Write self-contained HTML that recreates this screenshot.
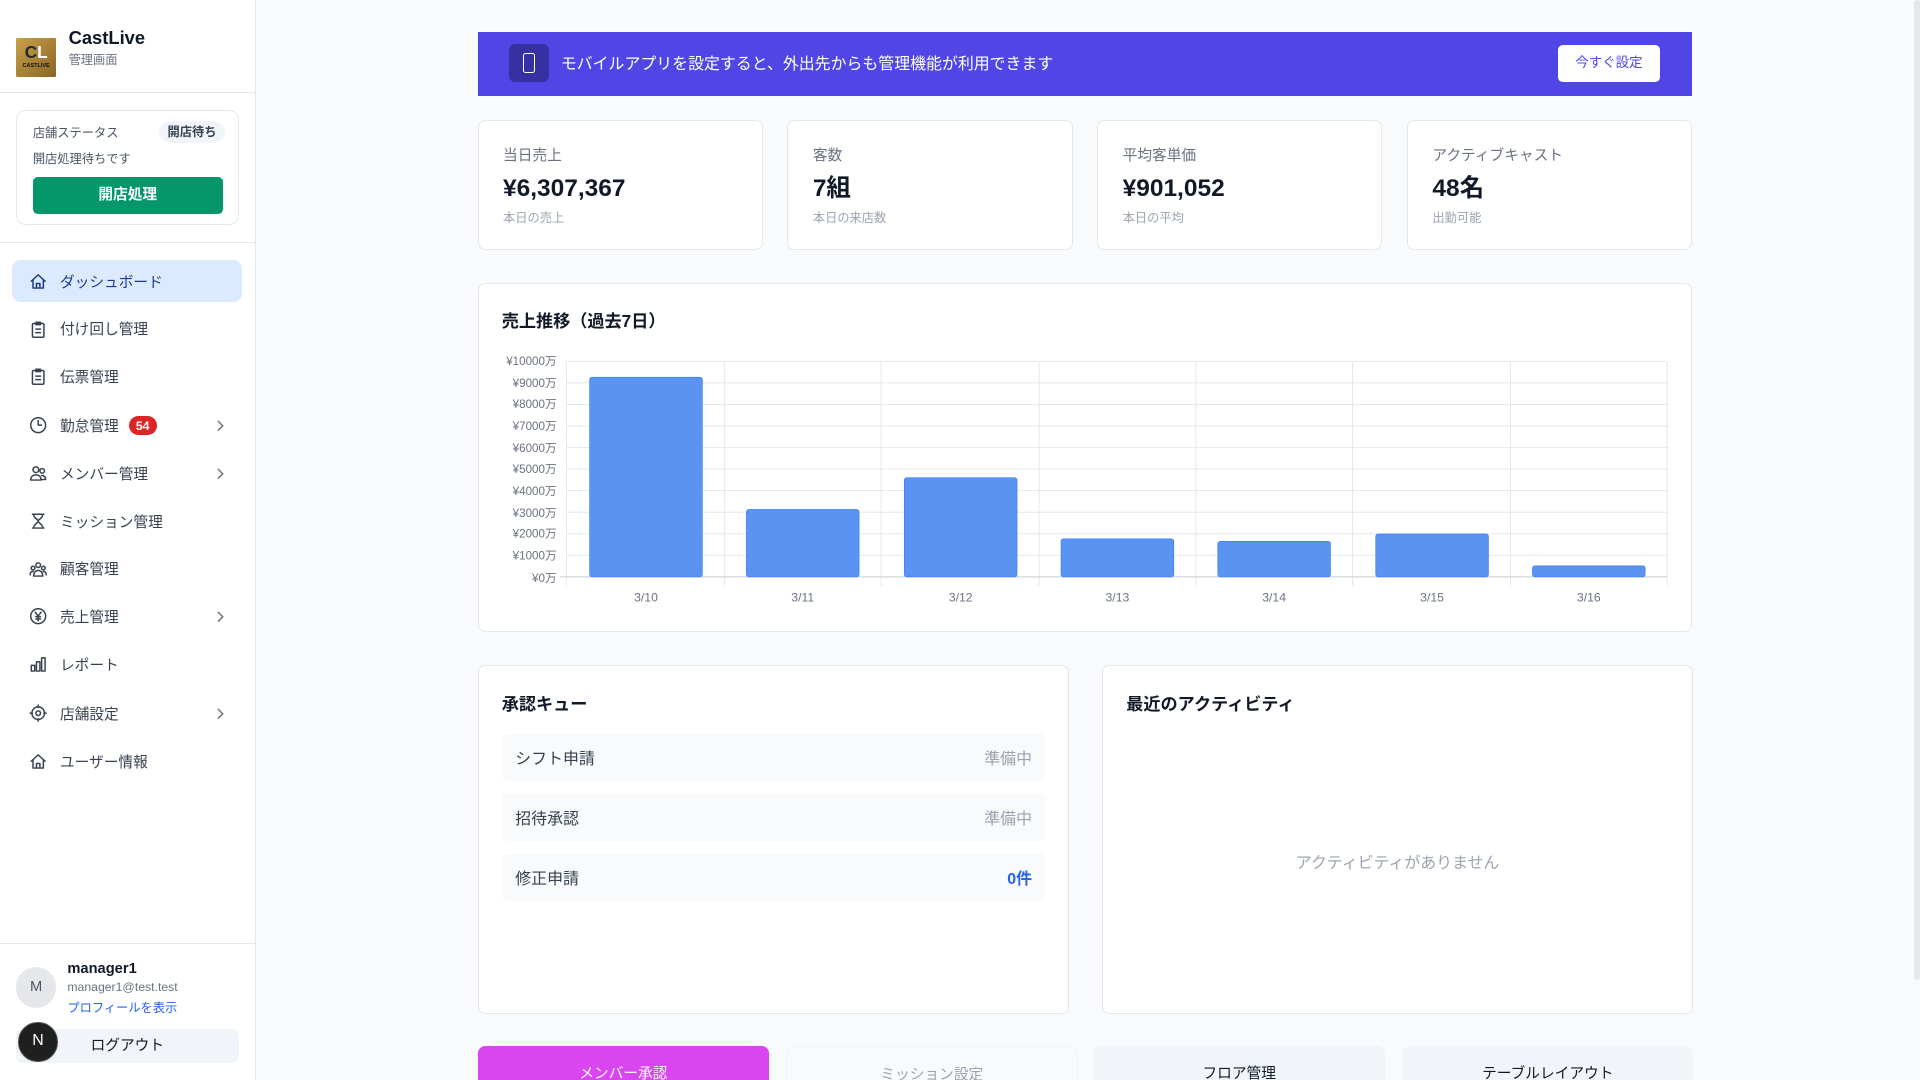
<!DOCTYPE html>
<html><head><meta charset="utf-8">
<style>
*{box-sizing:border-box;margin:0;padding:0}
html,body{width:1920px;height:1080px;overflow:hidden;background:#f8fafc}
#r{zoom:1.2245;width:1568px;height:882px;position:relative;font-family:"Liberation Sans","Noto Sans CJK JP",sans-serif;color:#111827}
.a{position:absolute}
.sb{left:0;top:0;width:209px;height:882px;background:#fff;border-right:1px solid #e5e7eb}
.card{background:#fff;border:1px solid #e5e7eb;border-radius:6px;position:absolute}
.nav{position:absolute;left:10px;width:188px;height:35px;border-radius:7px;font-size:12px;color:#374151;display:flex;align-items:center;padding-left:14px}
.nav svg.i{width:15px;height:15px;margin-right:10px;fill:none;stroke:#374151;stroke-width:1.3;stroke-linecap:round;stroke-linejoin:round}
.nav svg.chev{position:absolute;right:15px;top:12px;width:7px;height:11px;fill:none;stroke:#6b7280;stroke-width:1.2}
.st .l{font-size:12px;color:#6b7280;position:absolute;left:20px;top:19px}
.st .v{font-size:20px;font-weight:bold;position:absolute;left:20px;top:43px;line-height:24px}
.st .s{font-size:10px;color:#9ca3af;position:absolute;left:20px;top:71px}
.q{position:absolute;left:19px;width:444px;height:39px;background:#f8fafc;border-radius:4px;font-size:13px;color:#374151;display:flex;align-items:center;justify-content:space-between;padding:0 11px}
.tab{position:absolute;top:854px;height:40px;border-radius:6px;font-size:12px;text-align:center;padding-top:13px;width:238px}
</style></head><body><div id="r">
<div class="a sb">
 <div class="a" style="left:13px;top:31px;width:33px;height:32px;background:linear-gradient(135deg,#c9a24a,#8a6424);border-radius:1px;color:#fff;font-size:4.5px;font-weight:bold;text-align:center">
  <div style="font-size:14px;margin-top:3px;color:#1f2937;font-weight:bold">C<span style="color:#fff">L</span></div><div style="color:#111">CASTLIVE</div></div>
 <div class="a" style="left:56px;top:22px;font-size:15px;font-weight:bold">CastLive</div>
 <div class="a" style="left:56px;top:41px;font-size:10px;color:#6b7280">管理画面</div>
 <div class="a" style="left:0;top:75px;width:208px;border-top:1px solid #e5e7eb"></div>
 <div class="a" style="left:13px;top:90px;width:182px;height:94px;border:1px solid #e5e7eb;border-radius:8px">
  <div class="a" style="left:13px;top:10px;font-size:10px;color:#4b5563">店舗ステータス</div>
  <div class="a" style="left:116px;top:8px;width:54px;height:18px;background:#f1f5f9;border-radius:9px;font-size:10px;font-weight:bold;color:#374151;text-align:center;line-height:18px">開店待ち</div>
  <div class="a" style="left:13px;top:31px;font-size:10px;color:#4b5563">開店処理待ちです</div>
  <div class="a" style="left:13px;top:54px;width:155px;height:30px;background:#059669;border-radius:4px;color:#fff;font-size:12px;font-weight:bold;text-align:center;line-height:30px">開店処理</div>
 </div>
 <div class="a" style="left:0;top:198px;width:208px;border-top:1px solid #e5e7eb"></div>
 <div class="nav" style="top:212px;background:#dbeafe;color:#1e3a8a"><svg class="i" viewBox="0 0 16 16" style="stroke:#1e3a8a"><path d="M2 8L8 2.5 14 8M3.5 6.8V14h9V6.8M6.5 14v-4h3v4"/></svg>ダッシュボード</div>
 <div class="nav" style="top:251px"><svg class="i" viewBox="0 0 16 16"><rect x="3" y="3" width="10" height="12" rx="1"/><path d="M6 2h4v2H6zM6 8h4M6 11h4"/></svg>付け回し管理</div>
 <div class="nav" style="top:290px"><svg class="i" viewBox="0 0 16 16"><rect x="3" y="3" width="10" height="12" rx="1"/><path d="M6 2h4v2H6zM6 8h4M6 11h4"/></svg>伝票管理</div>
 <div class="nav" style="top:330px"><svg class="i" viewBox="0 0 16 16"><circle cx="8" cy="8" r="6.5"/><path d="M8 4v4h3"/></svg>勤怠管理<span style="margin-left:8px;background:#dc2626;color:#fff;font-size:10px;font-weight:bold;border-radius:9px;padding:2px 6px">54</span><svg class="chev" viewBox="0 0 7 11"><path d="M1.5 1.5l4 4-4 4"/></svg></div>
 <div class="nav" style="top:369px"><svg class="i" viewBox="0 0 16 16"><circle cx="6" cy="5" r="2.5"/><circle cx="11.5" cy="6" r="2"/><path d="M1.5 14c0-3 2-4.5 4.5-4.5S10.5 11 10.5 14zM11 10c2 0 3.5 1 3.5 3.5H11"/></svg>メンバー管理<svg class="chev" viewBox="0 0 7 11"><path d="M1.5 1.5l4 4-4 4"/></svg></div>
 <div class="nav" style="top:408px"><svg class="i" viewBox="0 0 16 16"><path d="M3 2h10M4 2c0 4 4 4 4 6s-4 2-4 6M12 2c0 4-4 4-4 6s4 2 4 6M3 14h10"/></svg>ミッション管理</div>
 <div class="nav" style="top:447px"><svg class="i" viewBox="0 0 16 16"><circle cx="8" cy="4.5" r="2"/><circle cx="3.5" cy="7" r="1.6"/><circle cx="12.5" cy="7" r="1.6"/><path d="M4 14c0-3 2-5 4-5s4 2 4 5zM1 13c0-2 1-3 2.5-3M15 13c0-2-1-3-2.5-3"/></svg>顧客管理</div>
 <div class="nav" style="top:486px"><svg class="i" viewBox="0 0 16 16"><circle cx="8" cy="8" r="6.5"/><path d="M5.5 4.5L8 8l2.5-3.5M8 8v4M6 8.5h4M6 10.5h4"/></svg>売上管理<svg class="chev" viewBox="0 0 7 11"><path d="M1.5 1.5l4 4-4 4"/></svg></div>
 <div class="nav" style="top:525px"><svg class="i" viewBox="0 0 16 16"><rect x="2" y="9" width="3" height="5"/><rect x="6.5" y="6" width="3" height="8"/><rect x="11" y="2.5" width="3" height="11.5"/></svg>レポート</div>
 <div class="nav" style="top:565px"><svg class="i" viewBox="0 0 16 16"><circle cx="8" cy="8" r="5.5"/><circle cx="8" cy="8" r="2"/><path d="M8 1v2M8 13v2M1 8h2M13 8h2"/></svg>店舗設定<svg class="chev" viewBox="0 0 7 11"><path d="M1.5 1.5l4 4-4 4"/></svg></div>
 <div class="nav" style="top:604px"><svg class="i" viewBox="0 0 16 16"><path d="M2 8L8 2.5 14 8M3.5 6.8V14h9V6.8M6.5 14v-4h3v4"/></svg>ユーザー情報</div>
 <div class="a" style="left:0;top:770px;width:208px;border-top:1px solid #e5e7eb"></div>
 <div class="a" style="left:13px;top:790px;width:33px;height:33px;border-radius:50%;background:#e5e7eb;color:#4b5563;font-size:12px;text-align:center;line-height:33px">M</div>
 <div class="a" style="left:55px;top:785px;font-size:12px;font-weight:bold">manager1</div>
 <div class="a" style="left:55px;top:800px;font-size:10px;color:#6b7280">manager1@test.test</div>
 <div class="a" style="left:55px;top:815px;font-size:10px;color:#2563eb">プロフィールを表示</div>
 <div class="a" style="left:13px;top:840px;width:182px;height:28px;background:#f1f5f9;border-radius:5px;font-size:12px;color:#111827;text-align:center;line-height:28px">ログアウト</div>
 <div class="a" style="left:15px;top:835px;width:32px;height:32px;border-radius:50%;background:#1f1f1f;border:1px solid #555;color:#fff;font-size:13px;text-align:center;line-height:30px">N</div>
</div>
<div class="a" style="left:1563px;top:0;width:5px;height:800px;background:#e5e7eb;border-radius:3px"></div>
<div class="a" style="left:390px;top:26px;width:992px;height:52px;background:#4f46e5">
 <div class="a" style="left:26px;top:10px;width:32px;height:31px;background:#3730a3;border-radius:5px"><div class="a" style="left:11px;top:7px;width:10px;height:17px;border:1.3px solid #fff;border-radius:2px"></div></div>
 <div class="a" style="left:68px;top:16px;font-size:13px;color:#fff">モバイルアプリを設定すると、外出先からも管理機能が利用できます</div>
 <div class="a" style="left:882px;top:11px;width:84px;height:30px;background:#fff;border-radius:4px;font-size:11px;color:#4f46e5;text-align:center;line-height:30px">今すぐ設定</div>
</div>
<div class="card st" style="left:390px;top:98px;width:233px;height:106px"><div class="l">当日売上</div><div class="v">¥6,307,367</div><div class="s">本日の売上</div></div>
<div class="card st" style="left:643px;top:98px;width:233px;height:106px"><div class="l">客数</div><div class="v">7組</div><div class="s">本日の来店数</div></div>
<div class="card st" style="left:896px;top:98px;width:233px;height:106px"><div class="l">平均客単価</div><div class="v">¥901,052</div><div class="s">本日の平均</div></div>
<div class="card st" style="left:1149px;top:98px;width:233px;height:106px"><div class="l">アクティブキャスト</div><div class="v">48名</div><div class="s">出勤可能</div></div>
<div class="card" style="left:390px;top:231px;width:992px;height:285px">
 <div class="a" style="left:19px;top:19px;font-size:14px;font-weight:bold">売上推移（過去7日）</div>
 <svg class="a" style="left:-1px;top:-1px" width="992" height="285" viewBox="390 231 992 285">
  <g stroke="#e5e7eb" stroke-width="0.8">
   <line x1="463" y1="295" x2="1362" y2="295"/><line x1="463" y1="312.6" x2="1362" y2="312.6"/><line x1="463" y1="330.2" x2="1362" y2="330.2"/><line x1="463" y1="347.8" x2="1362" y2="347.8"/><line x1="463" y1="365.4" x2="1362" y2="365.4"/><line x1="463" y1="383" x2="1362" y2="383"/><line x1="463" y1="400.6" x2="1362" y2="400.6"/><line x1="463" y1="418.2" x2="1362" y2="418.2"/><line x1="463" y1="435.8" x2="1362" y2="435.8"/><line x1="463" y1="453.4" x2="1362" y2="453.4"/>
   <line x1="463" y1="295" x2="463" y2="478"/><line x1="592" y1="295" x2="592" y2="478"/><line x1="720" y1="295" x2="720" y2="478"/><line x1="849" y1="295" x2="849" y2="478"/><line x1="977" y1="295" x2="977" y2="478"/><line x1="1105" y1="295" x2="1105" y2="478"/><line x1="1234" y1="295" x2="1234" y2="478"/><line x1="1362" y1="295" x2="1362" y2="478"/>
  </g>
  <line x1="458" y1="471" x2="1362" y2="471" stroke="#d1d5db"/>
  <g fill="#5b93f2" stroke="#3b82f6" stroke-width="0.6">
   <rect x="482" y="308" width="92" height="163" rx="2"/><rect x="610" y="416" width="92" height="55" rx="2"/><rect x="739" y="390" width="92" height="81" rx="2"/><rect x="867" y="440" width="92" height="31" rx="2"/><rect x="995" y="442" width="92" height="29" rx="2"/><rect x="1124" y="436" width="92" height="35" rx="2"/><rect x="1252" y="462" width="92" height="9" rx="2"/>
  </g>
  <g font-size="9.5" fill="#6b7280" text-anchor="end" font-family="Liberation Sans,Noto Sans CJK JP,sans-serif">
   <text x="455" y="298">¥10000万</text><text x="455" y="316">¥9000万</text><text x="455" y="333">¥8000万</text><text x="455" y="351">¥7000万</text><text x="455" y="369">¥6000万</text><text x="455" y="386">¥5000万</text><text x="455" y="404">¥4000万</text><text x="455" y="422">¥3000万</text><text x="455" y="439">¥2000万</text><text x="455" y="457">¥1000万</text><text x="455" y="475">¥0万</text>
  </g>
  <g font-size="10" fill="#6b7280" text-anchor="middle" font-family="Liberation Sans,sans-serif">
   <text x="528" y="491">3/10</text><text x="656" y="491">3/11</text><text x="785" y="491">3/12</text><text x="913" y="491">3/13</text><text x="1041" y="491">3/14</text><text x="1170" y="491">3/15</text><text x="1298" y="491">3/16</text>
  </g>
 </svg>
</div>
<div class="card" style="left:390px;top:543px;width:483px;height:285px">
 <div class="a" style="left:19px;top:20px;font-size:14px;font-weight:bold">承認キュー</div>
 <div class="q" style="top:55px"><span>シフト申請</span><span style="color:#9ca3af">準備中</span></div>
 <div class="q" style="top:104px"><span>招待承認</span><span style="color:#9ca3af">準備中</span></div>
 <div class="q" style="top:153px"><span>修正申請</span><span style="color:#2563eb;font-weight:bold">0件</span></div>
</div>
<div class="card" style="left:900px;top:543px;width:483px;height:285px">
 <div class="a" style="left:19px;top:20px;font-size:14px;font-weight:bold">最近のアクティビティ</div>
 <div class="a" style="left:0;width:481px;top:150px;text-align:center;font-size:13px;color:#9ca3af">アクティビティがありません</div>
</div>
<div class="tab" style="left:390px;background:#d946ef;color:#fff">メンバー承認</div>
<div class="tab" style="left:642px;background:#f8fafc;color:#9ca3af;border:1px solid #f1f5f9">ミッション設定</div>
<div class="tab" style="left:893px;background:#f1f5f9;color:#111827">フロア管理</div>
<div class="tab" style="left:1145px;background:#f1f5f9;color:#111827">テーブルレイアウト</div>
</div></body></html>
